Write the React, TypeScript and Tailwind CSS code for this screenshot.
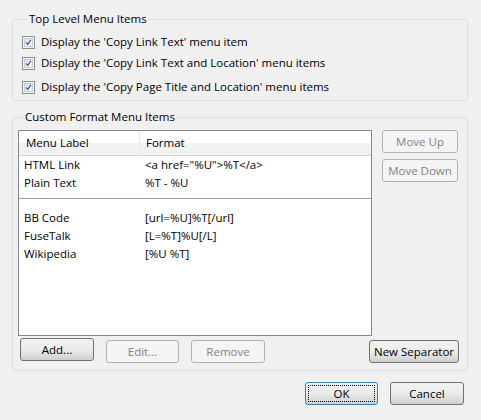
import React from "react";

const font = { fontFamily: '"Segoe UI", "Open Sans", sans-serif' };

function Check() {
  return (
    <span className="w-[13px] h-[13px] border border-[#8f8f8f] bg-[#f4f4f4] flex items-center justify-center shrink-0">
      <span className="w-[9px] h-[9px] border border-[#c5cbd5] bg-gradient-to-br from-[#dde2ea] to-[#f8f9fb] flex items-center justify-center">
        <svg width="9" height="9" viewBox="0 0 9 9">
          <path d="M1.5 4.5 L3.5 6.8 L7.5 1.2" fill="none" stroke="#3d5795" strokeWidth="1.6" />
        </svg>
      </span>
    </span>
  );
}

function CheckRow({ label, className }: { label: string; className?: string }) {
  return (
    <div className={`flex items-center h-4 gap-[6px] ${className ?? ""}`}>
      <Check />
      <span className="text-[11.5px] leading-4 text-black">{label}</span>
    </div>
  );
}

function Btn({
  children,
  w,
  disabled,
  focus,
}: {
  children: React.ReactNode;
  w: string;
  disabled?: boolean;
  focus?: boolean;
}) {
  if (disabled) {
    return (
      <button className={`${w} h-[23px] rounded-[3px] border border-[#adb2b5] bg-[#f4f4f4] text-[11.5px] text-[#838383] leading-none`}>
        {children}
      </button>
    );
  }
  return (
    <button
      className={`${w} h-[23px] rounded-[3px] border ${focus ? "border-[#3c7fb1]" : "border-[#707070]"} bg-gradient-to-b from-[#f2f2f2] via-[#ebebeb] to-[#cfcfcf] text-[11.5px] text-black leading-none p-[2px]`}
    >
      <span
        className={`w-full h-full flex items-center justify-center ${focus ? "border border-dotted border-black" : ""}`}
      >
        {children}
      </span>
    </button>
  );
}

const rows = [
  { label: "HTML Link", format: '<a href="%U">%T</a>' },
  { label: "Plain Text", format: "%T - %U" },
  null,
  { label: "BB Code", format: "[url=%U]%T[/url]" },
  { label: "FuseTalk", format: "[L=%T]%U[/L]" },
  { label: "Wikipedia", format: "[%U %T]" },
];

export default function App() {
  return (
    <div className="w-[481px] h-[420px] bg-[#f0f0f0] pt-[11px] px-[12px] text-black" style={font}>
      {/* Top level group */}
      <fieldset className="w-[456px] border border-[#d5dfe5] rounded-[3px] pl-[9px] pb-[5px]">
        <legend className="ml-[6px] px-[1px] text-[11.5px] leading-4">Top Level Menu Items</legend>
        <CheckRow className="mt-[7px]" label="Display the 'Copy Link Text' menu item" />
        <CheckRow className="mt-[5px]" label="Display the 'Copy Link Text and Location' menu items" />
        <CheckRow className="mt-[8px]" label="Display the 'Copy Page Title and Location' menu items" />
      </fieldset>

      {/* Custom format group */}
      <fieldset className="w-[456px] mt-[8px] border border-[#d5dfe5] rounded-[3px] pl-[5px] pr-[8px] pb-[7px]">
        <legend className="ml-[6px] px-[1px] text-[11.5px] leading-4">Custom Format Menu Items</legend>
        <div className="flex mt-[5px]">
          <div className="w-[354px] h-[206px] border border-[#828790] bg-white">
            <div className="flex h-[25px] border-b border-[#d5d5d5] bg-gradient-to-b from-white from-50% to-[#f1f2f4] to-50%">
              <div className="w-[121px] border-r border-[#e3e8ee] pl-[7px] flex items-center text-[11.5px]">Menu Label</div>
              <div className="flex-1 pl-[6px] flex items-center text-[11.5px]">Format</div>
            </div>
            {rows.map((r, i) =>
              r ? (
                <div key={i} className="flex h-[18px] items-center text-[11.5px]">
                  <div className="w-[121px] pl-[5px]">{r.label}</div>
                  <div className="flex-1 pl-[5px] whitespace-pre">{r.format}</div>
                </div>
              ) : (
                <div key={i} className="h-[17px] pt-[6px]">
                  <div className="h-px bg-[#a0a0a0]" />
                </div>
              )
            )}
          </div>
          <div className="ml-[10px] flex flex-col gap-[6px]">
            <Btn w="w-[76px]" disabled>Move Up</Btn>
            <Btn w="w-[76px]" disabled>Move Down</Btn>
          </div>
        </div>
        <div className="flex mt-[2px] pl-[2px]">
          <Btn w="w-[74px]">Add...</Btn>
          <div className="ml-[12px]">
            <Btn w="w-[73px]" disabled>Edit...</Btn>
          </div>
          <div className="ml-[12px]">
            <Btn w="w-[74px]" disabled>Remove</Btn>
          </div>
          <div className="ml-auto">
            <Btn w="w-[90px]">New Separator</Btn>
          </div>
        </div>
      </fieldset>

      <div className="flex justify-end gap-[12px] mt-[11px] pr-[5px]">
        <Btn w="w-[73px]" focus>OK</Btn>
        <Btn w="w-[74px]">Cancel</Btn>
      </div>
    </div>
  );
}
